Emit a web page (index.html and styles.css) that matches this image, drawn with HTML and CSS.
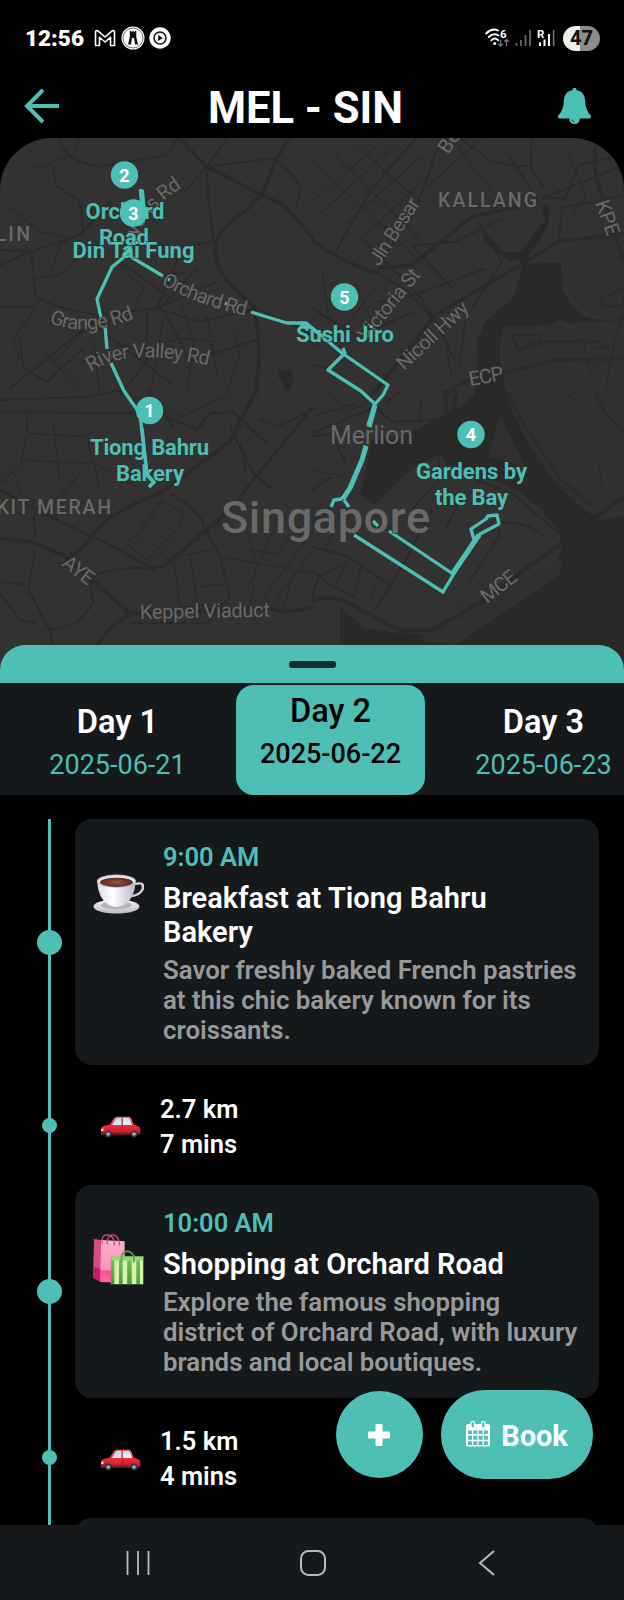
FILE: index.html
```html
<!DOCTYPE html>
<html lang="en">
<head>
<meta charset="utf-8">
<meta name="viewport" content="width=device-width, initial-scale=1">
<title>MEL - SIN</title>
<link rel="stylesheet" href="styles.css">
</head>
<body>
<svg class="defs" aria-hidden="true">
  <defs>
    <linearGradient id="carBody" x1="0" y1="0" x2="0" y2="1"><stop offset="0" stop-color="#ff6a62"/><stop offset=".45" stop-color="#f0303a"/><stop offset="1" stop-color="#c4152c"/></linearGradient>
    <linearGradient id="glass" x1="0" y1="0" x2="1" y2="1"><stop offset="0" stop-color="#a9dff8"/><stop offset="1" stop-color="#e5f6ff"/></linearGradient>
    <linearGradient id="cupSide" x1="0" y1="0" x2="1" y2="0"><stop offset="0" stop-color="#dcd9e4"/><stop offset=".4" stop-color="#ffffff"/><stop offset="1" stop-color="#b9b5c4"/></linearGradient>
    <linearGradient id="saucer" x1="0" y1="0" x2="0" y2="1"><stop offset="0" stop-color="#f6f5f9"/><stop offset="1" stop-color="#bbb8c4"/></linearGradient>
    <radialGradient id="coffee"><stop offset="0" stop-color="#9c5340"/><stop offset="1" stop-color="#592a21"/></radialGradient>
    <linearGradient id="pinkBag" x1="0" y1="0" x2="0" y2="1"><stop offset="0" stop-color="#ffb0d0"/><stop offset=".7" stop-color="#ff8fbd"/><stop offset=".72" stop-color="#f2528f"/><stop offset="1" stop-color="#ff6aa4"/></linearGradient>
    <linearGradient id="greenBag" x1="0" y1="0" x2="0" y2="1"><stop offset="0" stop-color="#7fc25c"/><stop offset="1" stop-color="#4e9637"/></linearGradient>
    <symbol id="car" viewBox="0 0 124 66">
      <path d="M3 42 Q2 34 10 30 L29 26 L42 7 Q45 2 52 2 L86 2 Q92 2 95 8 L103 26 L115 30 Q123 34 122 46 L121 55 L4 56 Z" fill="url(#carBody)"/>
      <path d="M36 27 L47 10 Q49 6 54 6 L65 6 L65 27 Z M69 6 L84 6 Q89 6 91 11 L97 27 L69 27 Z" fill="url(#glass)"/>
      <path d="M67 4V54" stroke="#9b1525" stroke-width="1.5"/>
      <path d="M3 40 L10 37 L11 44 L3 46Z" fill="#ffe1a0"/>
      <rect x="2" y="50" width="120" height="6" rx="3" fill="#6d2230"/>
      <circle cx="25" cy="54" r="10.5" fill="#353740"/><circle cx="25" cy="54" r="5.5" fill="#a9adb8"/>
      <circle cx="103" cy="54" r="10.5" fill="#353740"/><circle cx="103" cy="54" r="5.5" fill="#a9adb8"/>
    </symbol>
  </defs>
</svg>
<main class="phone">
  <div class="status">
    <span class="clock">12:56</span>
    <svg class="gmail" viewBox="0 0 22 18"><path d="M1.5 16.5V3.2Q1.5 1.2 3.6 1.7L11 8 18.400 1.700Q20.500 1.200 20.500 3.200V16.500H16.500V8.400L11 13 5.500 8.400V16.500Z"/></svg>
    <svg class="badge" viewBox="0 0 24 24"><circle cx="12" cy="12" r="11.500" fill="#fff"/><circle cx="12" cy="12" r="10" fill="none" stroke="#333" stroke-width=".7"/><path d="M8.800 5h1.500v1h1v-1h1.500v1h1v-1h1.500v6l1.700 7.500h-3l-1-6.500h-2l-1 6.500h-3L8.800 11Z" fill="#111"/></svg>
    <svg class="badge small" viewBox="0 0 22 22"><circle cx="11" cy="11" r="10.700" fill="#fff"/><circle cx="11" cy="11" r="6" fill="none" stroke="#111" stroke-width="1.500"/><path d="M9.200 8v6l4.600-3z" fill="#111"/></svg>
    <span class="grow"></span>
    <svg class="wifi" viewBox="0 0 25 20">
      <g fill="none" stroke="#fff" stroke-width="1.900" stroke-linecap="round"><path d="M1.200 5.500Q7-.3 13 2.500"/><path d="M3.800 9Q8.500 4.300 13.500 7.500"/><path d="M6.300 12.200Q9.700 9 13.200 12.200"/></g>
      <circle cx="9.700" cy="15.500" r="1.500" fill="#fff"/>
      <text x="15" y="9.500" class="tiny">6</text>
      <g stroke="#777" stroke-width="1.300" fill="none"><path d="M15.500 11.500v6.500M13.200 15.700l2.300 2.300 2.300-2.300M21.500 18v-6.500M19.200 13.800l2.300-2.300 2.300 2.300"/></g>
    </svg>
    <svg class="bars" viewBox="0 0 16 18"><path d="M1.500 14v3M6 11v6M10.500 6v11M15 1v16" stroke="#666" stroke-width="1.800"/></svg>
    <svg class="bars roam" viewBox="0 0 18 18"><text x="0" y="8.500" class="tiny">R</text><path d="M3 13.500v3.500M7.500 10.500v6.500M12 5v12" stroke="#fff" stroke-width="2"/><path d="M16.600 1v16" stroke="#777" stroke-width="1.500"/></svg>
    <span class="battery">47</span>
  </div>

  <header class="bar">
    <svg class="back" viewBox="0 0 36 36"><path d="M35 18H3M19 2 3 18 19 34" fill="none" stroke="currentColor" stroke-width="4"/></svg>
    <h1>MEL - SIN</h1>
    <svg class="bell" viewBox="0 0 36 40"><path d="M18 .8Q20 .8 20.200 3.300Q28.500 4.500 29 13.500Q29 24 35 29.500Q35.600 31.300 34 32.300H23.500Q23 38 18 38Q13 38 12.500 32.300H2Q.4 31.300 1 29.500Q7 24 7 13.500Q7.500 4.500 15.800 3.300Q16 .8 18 .8Z" fill="currentColor"/><path d="M15.500 33.500Q15.800 35.800 18.200 36" fill="none" stroke="#06302c" stroke-width=".8"/></svg>
  </header>

  <svg class="map" viewBox="0 138 624 530">
    <rect x="0" y="138" width="624" height="530" fill="#323232"/>
    <g fill="#292929">
      <path d="M523 263H560Q564 275 563 290Q572 310 588 318Q606 321 624 318V328Q605 334 586 328L560 320L545 327Q520 328 505 329Q498 340 500 358L506 395Q520 430 545 470Q560 490 585 510L600 520L624 516V668H340V607L364 628L397 633L410 633L450 640L500 595L555 565Q565 550 560 535Q540 500 505 485Q490 477 480 480L450 470L440 455L416 465L375 505L360 495L372 440L405 435L455 410L475 395L478 340Q484 315 510 303Q520 285 523 263Z"/>
      <path d="M484 230L502 252L520 252L545 220L542 205L550 205L548 225L525 262L505 258L483 240Z"/>
      <path d="M278 370h14l1 10-3 10h-6l-1-8-5-5Z"/>
    </g>
    <g fill="#303030">
      <path d="M500 415l8 16 20 40-20-10-20-4Z"/><path d="M562 250Q590 232 624 238V318Q585 322 567 292Z"/><path d="M503 327L624 320V510Q590 515 570 495Q530 460 507 398Z"/>
      <path d="M420 640L562 558L560 575L455 645Z"/>
    </g>
    <g fill="none" stroke="#2a2a2a" stroke-linejoin="round">
      <g transform="translate(0 135) scale(.33333)">
        <path stroke-width="11" d="M530 0L620 95L785 180L830 70L870 0M785 180L850 210 940 310M785 180L740 225Q650 280 645 340Q640 420 760 510Q790 640 765 780"/>
        <path stroke-width="6" d="M620 95L815 70Q880 110 900 160L890 220M620 95L550 175M690 0L620 95 625 190 640 320 580 330M180 10Q190 80 300 95L500 60 540 0M0 345L95 350 240 300 330 200M95 350L105 480Q150 520 300 540L470 520 650 440M470 520L540 360M160 90L165 150 240 200 250 290 180 330 150 420M0 390L90 350M0 515L105 515M440 540L440 680 360 780M470 520L600 560 770 520 940 600M500 540L570 680 780 610M60 620L70 700 140 740 250 640M30 760L230 600 310 530M320 280L360 380 500 480M590 400L480 520M270 560L520 750"/>
        <path stroke-width="3.500" d="M105 100L220 60 240 0M20 210L120 290 220 310M250 350L180 420 100 430M350 380L430 460 410 500M380 370L490 420 560 410M120 500L40 610 60 680M130 650L240 760M160 680L260 580M310 600L420 650 540 610 650 620M540 500L580 620 560 780M620 540L650 720M490 550L450 780M280 610L300 780M700 590L720 660 680 780"/>
      </g>
      <g transform="translate(312 135) scale(.33333)">
        <path stroke-width="11" d="M0 315Q80 380 200 415M200 400L300 390 480 245 620 215M180 780L370 540 600 405 740 320 936 295M850 0L850 120 936 380M400 780Q460 720 590 710L730 675 936 670"/>
        <path stroke-width="6" d="M70 350L180 160 320 0M200 415L290 470 370 560 430 680M350 120L370 50 420 0M350 120L310 220 200 390M690 190L936 90M690 190L760 190 800 90 936 60M660 0L655 100 700 160M430 0L540 80 620 95 660 90M310 330L430 320 570 250M160 590L310 530M140 300L320 480 400 600M500 260L570 380 480 520M0 520L130 600 250 560M300 330L420 460M510 290L600 380M590 60L680 200M200 500L310 480 520 400M600 600L685 600 690 625 640 640 620 650ZM630 640L660 620 860 620 890 640 850 640M865 490L936 460 936 510 880 515ZM740 320L750 220 936 180M0 690L50 700"/>
        <path stroke-width="3.500" d="M0 200L210 20M20 240L250 30M100 270L330 60M150 310L350 120M0 80L200 260 380 430M70 60L230 220 350 340M130 30L300 180M440 40L540 170M520 0L350 150M770 60L820 180 780 240M30 400L50 560M130 440L180 560M390 560L420 730M190 460L110 560 0 640M460 560L440 710M820 670L840 720 870 680M790 620L820 610 820 645ZM880 780L910 600 936 540"/>
      </g>
      <g transform="translate(0 390) scale(.33333)">
        <path stroke-width="12" d="M0 445L90 455 190 495 390 670 330 715 280 780M210 500L250 470 300 410Q350 360 480 310L690 155 770 0M390 670L800 655Q870 675 940 650"/>
        <path stroke-width="8" d="M940 50L690 355 490 530H450L320 460 150 380 0 300M490 530L650 400 700 340M0 65L400 70M500 80L590 120 630 70 700 65 800 160M690 110L760 250 820 300"/>
        <path stroke-width="6" d="M510 310Q600 360 610 405L660 500 690 620 620 700 390 700M270 560Q380 520 470 540M105 480L85 600 150 720 230 700 280 640 270 560M0 575L80 585M0 610L60 690 110 700M150 720L160 780M0 30L260 20 370 0M440 0L520 110M780 90L830 110 940 60M720 160L740 250"/>
        <path stroke-width="3.500" d="M80 130L60 230 0 280M80 60L80 130 260 140 300 300M160 100L180 280M40 240L70 330 170 330 250 240M60 210L280 220 410 290M480 330L550 370 530 420 440 510 380 460 420 420ZM490 330L410 450M570 490L590 640M640 480L520 500 540 650 690 640M600 590L680 580M740 410L770 520 750 650M830 400L740 600M900 410L830 490 740 480M940 420L780 640M940 480L820 640M660 500L940 550M880 550L850 660M360 0L540 80 700 10M480 490L530 520M100 330L105 450"/>
      </g>
      <g transform="translate(312 390) scale(.33333)">
        <path stroke-width="13" d="M0 630Q60 610 110 640L260 720H360L500 640 740 465 936 320M400 0L405 200M430 0L420 200"/>
        <path stroke-width="6" d="M0 300L60 260M0 130L190 50 240 95 400 90M270 0L220 40M100 220L60 130 0 140M0 470L110 500 240 590M190 660L270 530 360 360M80 530L20 560 0 620M400 420L460 300M470 580L560 440V400Q640 390 700 440M580 0Q640 120 740 260L840 350M850 0Q870 80 936 120M380 150L380 270 300 360 290 400M490 270L600 310 740 430M0 540L60 590 130 620"/>
        <path stroke-width="3.500" d="M0 80L130 40M30 0L120 60 190 20M0 240L100 260M40 480L90 360M110 500L70 590M150 520L130 600M200 550L170 640M0 400L80 330M330 30L320 100M860 210L870 300M760 10L790 30M710 70V90M750 170V190M430 620L450 640"/>
      </g>
    </g>
    <g class="place">
      <text x="-18" y="241" textLength="48">ELIN</text>
      <text x="438" y="207" textLength="99">KALLANG</text>
      <text x="-18" y="514" textLength="129">UKIT MERAH</text>
    </g>
    <path class="route" d="M140.500 189L142.500 210L132 228M129 253L112 267 97 299 101 318M105 326L107 349M111 363L124 391 140 414 144 450 147 476 154 482 149 487M127 252L131 257 163 276M251 312L287 323H306L342 353 388 385 383 395 375 404 368 425M366 446L363 456Q357 475 348 492L341 499 334 500 331 507M343 348L345 353 328 370 361 391 375 404M168 279L170 280M225 303L227 304M344 500L349 507M373 521L378 526M389 531L453 574M354 535L443 592 474 540 471 529 486 519 488 516 497 515 499 524 480 534 453 574"/>
    <path class="route heavy" d="M375 405L369 427M366 446L362 460 350 488 343 499M479 535L453 573M124 256L131 244M141.500 190L143 207"/>
    <g class="road">
      <path id="p1" d="M136 247Q139 213 189 183"/><text><textPath href="#p1" textLength="78">evens Rd</textPath></text>
      <path id="p2" d="M161 284Q195 305 252 317"/><text><textPath href="#p2" textLength="91">Orchard Rd</textPath></text>
      <path id="p3" d="M49 322Q82 339 136 318"/><text><textPath href="#p3" textLength="88">Grange Rd</textPath></text>
      <path id="p4" d="M91 372Q125 346 211 366"/><text><textPath href="#p4" textLength="121">River Valley Rd</textPath></text>
      <text transform="translate(379 267) rotate(-57)" textLength="76">Jln Besar</text>
      <text transform="translate(367 342) rotate(-51)" textLength="86">Victoria St</text>
      <text transform="translate(404 371) rotate(-43)" textLength="90">Nicoll Hwy</text>
      <text transform="translate(448 155) rotate(-56)" textLength="34">Ben</text>
      <text transform="translate(595 203) rotate(70)" textLength="36">KPE</text>
      <text transform="translate(470 386) rotate(-10)" textLength="35">ECP</text>
      <text transform="translate(61 565) rotate(38)" textLength="34">AYE</text>
      <text transform="translate(487 604) rotate(-38)" textLength="40">MCE</text>
      <text transform="translate(140 619) rotate(-1)" textLength="130">Keppel Viaduct</text>
    </g>
    <text class="merlion" x="330" y="444" textLength="83">Merlion</text>
    <text class="city" x="221" y="533" textLength="209">Singapore</text>
    <g class="stop">
      <text x="85.500" y="219" textLength="79">Orchard</text>
      <text x="99" y="245" textLength="50">Road</text>
      <text x="72.500" y="257.500" textLength="122">Din Tai Fung</text>
      <text x="296" y="341.500" textLength="98">Sushi Jiro</text>
      <text x="90" y="454.500" textLength="119">Tiong Bahru</text>
      <text x="116" y="481" textLength="68">Bakery</text>
      <text x="416" y="478.500" textLength="111">Gardens by</text>
      <text x="435" y="505" textLength="73">the Bay</text>
    </g>
    <path class="route" d="M142 428L147 474 154 482 149 487M123 257L131 247M300 325L312 328 322 336"/>
    <g class="pin">
      <circle cx="124.500" cy="175" r="13.700"/><text x="124.500" y="181.500">2</text>
      <circle cx="133.500" cy="213" r="13.700"/><text x="133.500" y="219.500">3</text>
      <circle cx="344.500" cy="297" r="13.700"/><text x="344.500" y="303.500">5</text>
      <circle cx="149.500" cy="410.500" r="13.700"/><text x="149.500" y="417">1</text>
      <circle cx="471" cy="434.500" r="13.700"/><text x="471" y="441">4</text>
    </g>
  </svg>

  <div class="sheet-top"><span class="handle"></span></div>
  <nav class="days">
    <div class="day"><b>Day 1</b><span>2025-06-21</span></div>
    <div class="day active"><b>Day 2</b><span>2025-06-22</span></div>
    <div class="day"><b>Day 3</b><span>2025-06-23</span></div>
  </nav>

  <section class="timeline">
    <div class="row">
      <div class="rail"><i class="dot"></i></div>
      <article class="card">
        <svg class="emoji cup" viewBox="0 1 50 48" preserveAspectRatio="none">
          <ellipse cx="23" cy="40" rx="22.500" ry="8.500" fill="url(#saucer)"/><ellipse cx="23" cy="38.500" rx="15" ry="4.500" fill="#b5b1bf"/>
          <path d="M41 13Q50 10 49 18Q47 26 36 28" fill="none" stroke="#d5d2dc" stroke-width="2.600"/>
          <path d="M4 9Q5 30 15 38Q23 43 31 38Q41 30 42 9Z" fill="url(#cupSide)"/>
          <ellipse cx="23" cy="9.500" rx="19" ry="7.500" fill="#e8e6ee" stroke="#aaa6b5" stroke-width=".8"/><ellipse cx="23" cy="11" rx="16" ry="5.500" fill="url(#coffee)"/>
        </svg>
        <div class="text">
          <p class="time">9:00 AM</p>
          <h2>Breakfast at Tiong Bahru<br>Bakery</h2>
          <p class="desc">Savor freshly baked French pastries<br>at this chic bakery known for its<br>croissants.</p>
        </div>
      </article>
    </div>
    <div class="row travel">
      <div class="rail"><i class="dot small"></i></div>
      <svg class="car"><use href="#car"/></svg>
      <p>2.7 km<br>7 mins</p>
    </div>
    <div class="row">
      <div class="rail"><i class="dot"></i></div>
      <article class="card">
        <svg class="emoji" viewBox="0 0 50 50">
          <path d="M1 5L8 6 8 47 0 43Z" fill="#d94b86"/><path d="M8 6L31 7V48L7 47Z" fill="url(#pinkBag)"/><path d="M0 32L7 34 7 47 0 43Z" fill="#c21e68"/>
          <path d="M9 10V5Q10 0 15 1Q21 2 21 11M14 10V6Q16 0 21 1Q26 3 26 11" fill="none" stroke="#d54a83" stroke-width="1.300"/>
          <rect x="17.500" y="22" width="32" height="27.500" fill="url(#greenBag)"/><path d="M21 25h4.500v24H21zM29 25h4.500v24H29zM38 25h4.500v24H38zM46 25h3v24h-3z" fill="#d3f2ad"/><path d="M17.500 22h32l-1 4h-30z" fill="#9ad877"/>
          <path d="M28 28V22Q29 17 33.500 17Q38 17 40 22V28" fill="none" stroke="#57a33e" stroke-width="1.600"/>
        </svg>
        <div class="text">
          <p class="time">10:00 AM</p>
          <h2>Shopping at Orchard Road</h2>
          <p class="desc">Explore the famous shopping<br>district of Orchard Road, with luxury<br>brands and local boutiques.</p>
        </div>
      </article>
    </div>
    <div class="row travel">
      <div class="rail"><i class="dot small"></i></div>
      <svg class="car"><use href="#car"/></svg>
      <p>1.5 km<br>4 mins</p>
    </div>
    <div class="row"><div class="rail"></div><article class="card next"></article></div>
    <div class="actions">
      <button class="add" aria-label="Add"><svg viewBox="0 0 22 22"><path d="M8.500 0H13.500Q14.500 0 14.500 1V7.500H21Q22 7.500 22 8.500V13.500Q22 14.500 21 14.500H14.500V21Q14.500 22 13.500 22H8.500Q7.500 22 7.500 21V14.500H1Q0 14.500 0 13.500V8.500Q0 7.500 1 7.500H7.500V1Q7.500 0 8.500 0Z" fill="#fff"/></svg></button>
      <button class="book"><svg viewBox="0 0 24 26"><path d="M2 3H22Q24 3 24 5V24Q24 25.500 22.500 25.500H1.500Q0 25.500 0 24V5Q0 3 2 3Z" fill="#fff"/><path d="M2 9.500h4v3.500h-4zm5.300 0h4v3.500h-4zm5.300 0h4v3.500h-4zm5.300 0h4v3.500h-4zM2 14.700h4v4h-4zm5.300 0h4v4h-4zm5.300 0h4v4h-4zm5.300 0h4v4h-4zM2 20.200h4v3.800h-4zm5.300 0h4v3.800h-4zm5.300 0h4v3.800h-4zm5.300 0h4v3.800h-4z" fill="#4dbfb5"/><rect x="5" y=".5" width="3.500" height="6.500" rx="1.700" fill="#4dbfb5" stroke="#fff" stroke-width="1.200"/><rect x="15.500" y=".5" width="3.500" height="6.500" rx="1.700" fill="#4dbfb5" stroke="#fff" stroke-width="1.200"/></svg>Book</button>
    </div>
  </section>

  <footer class="sysnav">
    <svg viewBox="0 0 24 26"><path d="M1.500 1V25M12 1V25M22.500 1V25" stroke="#b9babb" stroke-width="1.800"/></svg>
    <svg viewBox="0 0 26 26"><rect x="1" y="1" width="24" height="24" rx="7.500" fill="none" stroke="#b9babb" stroke-width="2"/></svg>
    <svg viewBox="0 0 18 26"><path d="M16 1 2 13 16 25" fill="none" stroke="#b9babb" stroke-width="2"/></svg>
  </footer>
</main>
</body>
</html>
```
FILE: styles.css
```css
* { box-sizing: border-box; margin: 0; }
body { background: #000; color: #fff; font-family: Roboto, "Liberation Sans", sans-serif; }
.defs { display: block; width: 0; height: 0; }
svg { flex: none; display: block; }
.phone { width: 624px; height: 1600px; display: flex; flex-direction: column; overflow: hidden; }

.status { height: 76px; flex: none; display: flex; align-items: center; padding: 0 24px 0 25px; }
.clock { font-size: 22.5px; font-weight: 900; width: 69px; white-space: nowrap; }
.gmail { width: 22px; height: 18px; fill: none; stroke: #fff; stroke-width: 1.6; stroke-linejoin: round; margin-right: 5px; }
.badge { width: 24px; height: 24px; margin-right: 4px; }
.badge.small { width: 22px; height: 22px; }
.grow { flex: 1; }
.wifi { width: 25px; height: 20px; margin-right: 5px; }
.tiny { font-size: 11.5px; font-weight: 700; fill: #fff; }
.bars { width: 16px; height: 18px; margin-right: 6px; }
.bars.roam { width: 18px; margin-right: 8px; }
.battery { width: 37px; height: 25px; border-radius: 13px; background: linear-gradient(90deg, #eee 47%, #8c8c8c 47%); color: #111; font-size: 20px; font-weight: 800; line-height: 25px; text-align: center; }

.bar { height: 62px; flex: none; display: flex; align-items: center; justify-content: space-between; padding: 0 32px 0 24px; color: #4dbfb5; }
.back { width: 36px; height: 36px; margin-bottom: 3px; }
.bell { width: 35px; height: 39px; margin-bottom: 2px; }
.bar h1 { color: #fff; font-size: 43.5px; font-weight: 700; line-height: 58px; padding-top: 4px; margin-right: 6px; white-space: nowrap; }

.map { width: 624px; height: 530px; border-radius: 52px 52px 0 0; }
.map text { font-family: Roboto, "Liberation Sans", sans-serif; }
.route { fill: none; stroke: #4dbfb5; stroke-width: 3.3; stroke-linejoin: round; }
.route.heavy { stroke-width: 5; }
.road path { fill: none; }
.road text, .merlion, .city, .place text { fill: #696969; paint-order: stroke; stroke: #303030; stroke-width: 1px; }
.road text { font-size: 20px; }
.place text { font-size: 19.5px; font-weight: 500; }
.map .merlion { font-size: 25px; }
.map .city { font-size: 45px; font-weight: 500; }
.stop text { fill: #4dbfb5; font-size: 22px; font-weight: 700; paint-order: stroke; stroke: #303030; stroke-width: 1px; }
.pin circle { fill: #4dbfb5; }
.pin text { fill: #fff; font-size: 18px; font-weight: 700; text-anchor: middle; }

.sheet-top { height: 38px; flex: none; margin-top: -23px; border-radius: 25px 25px 0 0; background: #4dbfb5; position: relative; display: flex; justify-content: center; padding-top: 16px; }
.handle { width: 47px; height: 7px; border-radius: 3px; background: #12302e; }
.days { height: 111.5px; flex: none; background: #16191c; display: flex; gap: 24px; padding: 2px 0 0 23px; overflow: hidden; }
.day { flex: none; width: 189px; height: 109.5px; border-radius: 18px; text-align: center; padding-top: 16px; }
.day b { display: block; font-size: 32.6px; line-height: 43px; font-weight: 600; }
.day span { display: block; font-size: 27px; line-height: 43px; color: #4dbfb5; white-space: nowrap; }
.day.active { background: #4dbfb5; color: #000; padding-top: 5px; }
.day.active b { font-weight: 500; }
.day.active span { color: #000; font-weight: 500; }

.timeline { flex: 1; min-height: 0; position: relative; overflow: hidden; padding-top: 24.5px; }
.row { display: flex; }
.rail { width: 75px; flex: none; display: flex; align-items: center; justify-content: center; padding-left: 24px; background: linear-gradient(#4dbfb5, #4dbfb5) 48px 0 / 3px 100% no-repeat; }
.dot { width: 25px; height: 25px; border-radius: 50%; background: #4dbfb5; }
.dot.small { width: 15px; height: 15px; }
.card { width: 524px; background: #16191c; border-radius: 17px; padding: 22.5px 0 20px 18px; display: flex; gap: 19px; }
.emoji { width: 51px; height: 51px; margin-top: 26px; }
.emoji.cup { height: 40px; margin-top: 32px; }
.time { color: #4dbfb5; font-size: 25.5px; line-height: 30px; font-weight: 600; }
.card h2 { font-size: 29.05px; line-height: 34px; font-weight: 600; margin-top: 9px; white-space: nowrap; }
.desc { color: #97999b; font-size: 25.8px; line-height: 29.8px; font-weight: 600; margin-top: 7.5px; white-space: nowrap; }
.card.next { height: 120px; }
.travel { height: 120px; align-items: stretch; }
.travel .car { width: 41px; height: 22px; margin: 51px 19px 0 25px; }
.travel p { font-size: 25.5px; line-height: 35px; font-weight: 600; padding-top: 26.3px; }

.actions { position: absolute; right: 31px; bottom: 46px; display: flex; align-items: center; gap: 18.5px; }
.actions button { border: 0; background: #4dbfb5; color: #fff; display: flex; align-items: center; justify-content: center; font-family: inherit; padding: 0; }
.actions .add { width: 87px; height: 87px; border-radius: 50%; }
.add svg { width: 22px; height: 22px; }
.actions .book { width: 152px; height: 89px; border-radius: 44px; font-size: 29px; font-weight: 700; gap: 11px; padding-top: 2px; }
.book svg { width: 24px; height: 26px; margin-bottom: 3px; }

.sysnav { height: 75px; flex: none; background: #16191c; display: flex; align-items: center; justify-content: space-between; padding: 0 124px 0 125px; }
.sysnav svg { height: 26px; width: 26px; }
```
